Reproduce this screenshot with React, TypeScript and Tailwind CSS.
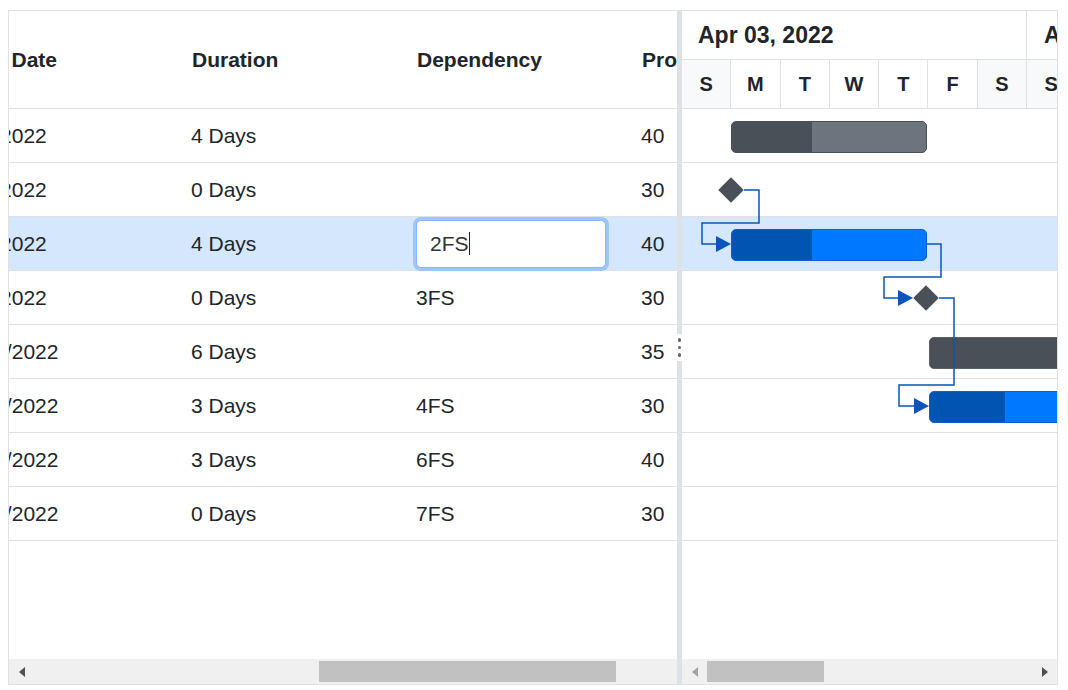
const rows = [
  { end: '4/7/2022', duration: '4 Days', dep: '', progress: 40 },
  { end: '4/4/2022', duration: '0 Days', dep: '', progress: 30 },
  { end: '4/7/2022', duration: '4 Days', dep: '2FS', progress: 40 },
  { end: '4/7/2022', duration: '0 Days', dep: '3FS', progress: 30 },
  { end: '4/15/2022', duration: '6 Days', dep: '', progress: 35 },
  { end: '4/12/2022', duration: '3 Days', dep: '4FS', progress: 30 },
  { end: '4/15/2022', duration: '3 Days', dep: '6FS', progress: 40 },
  { end: '4/15/2022', duration: '0 Days', dep: '7FS', progress: 30 },
];

const days = ['S', 'M', 'T', 'W', 'T', 'F', 'S', 'S', 'M', 'T', 'W', 'T', 'F', 'S'];

type Bar =
  | { kind: 'task'; left: number; width: number; done: number; tone: 'gray' | 'blue' | 'dark' }
  | { kind: 'milestone'; center: number };

const bars: (Bar | null)[] = [
  { kind: 'task', left: 49, width: 196, done: 80, tone: 'gray' },
  { kind: 'milestone', center: 49 },
  { kind: 'task', left: 49, width: 196, done: 80, tone: 'blue' },
  { kind: 'milestone', center: 244 },
  { kind: 'task', left: 247, width: 400, done: 140, tone: 'dark' },
  { kind: 'task', left: 247, width: 246, done: 75, tone: 'blue' },
  null,
  null,
];

// connector polylines + arrow heads, chart body coordinates
const links = [
  { line: '62,81 77,81 77,114 20,114 20,135 34,135', head: '34,127 49,135 34,143' },
  { line: '245,135 259,135 259,168 202,168 202,189 216,189', head: '216,181 231,189 216,197' },
  { line: '257,189 272,189 272,276 217,276 217,297 232,297', head: '232,289 247,297 232,305' },
];

function TaskBar({ bar }: { bar: Bar }) {
  if (bar.kind === 'milestone') {
    return (
      <div
        className="absolute top-[18px] w-[18px] h-[18px] rotate-45 bg-[#495057]"
        style={{ left: bar.center - 9 }}
      />
    );
  }
  const blue = bar.tone === 'blue';
  return (
    <div
      className={`absolute top-[12px] h-[32px] rounded-[5px] border overflow-hidden flex ${
        blue ? 'border-[#0b5ed7] bg-[#0078ff]' : bar.tone === 'dark' ? 'border-[#5c636a] bg-[#495057]' : 'border-[#495057] bg-[#6c757d]'
      }`}
      style={{ left: bar.left, width: bar.width }}
    >
      <div className={blue ? 'bg-[#0055b3]' : 'bg-[#495057]'} style={{ width: bar.done }} />
    </div>
  );
}

function Arrow({ dir, dim }: { dir: 'left' | 'right'; dim?: boolean }) {
  return (
    <svg width="6" height="10" viewBox="0 0 6 10">
      <polygon points={dir === 'left' ? '6,0 0,5 6,10' : '0,0 6,5 0,10'} fill={dim ? '#a3a3a3' : '#505050'} />
    </svg>
  );
}

export default function App() {
  return (
    <div className="min-h-screen bg-white pt-[10px] pl-[8px] font-['Liberation_Sans',Arial,sans-serif] text-[#212529]">
      <div className="flex w-[1050px] h-[675px] border border-[#dee2e6]">
        {/* Grid pane */}
        <div className="flex flex-col w-[668px] overflow-hidden">
          <div className="flex-1 overflow-hidden">
            <div className="ml-[-56px] w-[960px]">
              <div className="flex h-[98px] border-b border-[#dee2e6] text-[21px] font-bold">
                <div className="w-[226px] pl-[13px] flex items-center">End Date</div>
                <div className="w-[225px] pl-[13px] flex items-center">Duration</div>
                <div className="w-[225px] pl-[13px] flex items-center">Dependency</div>
                <div className="w-[225px] pl-[13px] flex items-center">Progress</div>
              </div>
              {rows.map((r, i) => (
                <div
                  key={i}
                  className={`flex h-[54px] border-b border-[#dee2e6] text-[21px] ${i === 2 ? 'bg-[#d4e7fc]' : ''}`}
                >
                  <div className="w-[226px] pl-3 flex items-center">{r.end}</div>
                  <div className="w-[225px] pl-3 flex items-center">{r.duration}</div>
                  <div className="w-[225px] pl-3 flex items-center">
                    {i === 2 ? (
                      <div className="w-[190px] h-[48px] bg-white border border-[#86b7fe] rounded-[5px] ring-[3px] ring-[#9ec5fe] flex items-center pl-[13px] text-[#333]">
                        {r.dep}
                        <span className="w-[1.5px] h-[23px] bg-[#212529]" />
                      </div>
                    ) : (
                      r.dep
                    )}
                  </div>
                  <div className="w-[225px] pl-3 flex items-center">{r.progress}</div>
                </div>
              ))}
            </div>
          </div>
          <div className="flex h-[25px] bg-[#f0f0f0]">
            <div className="w-[25px] flex items-center justify-center">
              <Arrow dir="left" />
            </div>
            <div className="ml-[285px] w-[297px] my-[2px] bg-[#c1c1c1]" />
          </div>
        </div>

        {/* Splitter */}
        <div className="w-[5px] flex flex-col">
          <div className="flex-1 bg-[#dee2e6]" />
          <div className="h-[27px] flex flex-col items-center justify-center gap-[4px]">
            <span className="w-[3.5px] h-[3.5px] rounded-full bg-[#5f666d]" />
            <span className="w-[3.5px] h-[3.5px] rounded-full bg-[#5f666d]" />
            <span className="w-[3.5px] h-[3.5px] rounded-full bg-[#5f666d]" />
          </div>
          <div className="flex-1 bg-[#dee2e6]" />
        </div>

        {/* Chart pane */}
        <div className="flex-1 flex flex-col overflow-hidden">
          <div className="flex h-[49px] border-b border-[#dee2e6] font-bold shrink-0">
            <div className="w-[345px] shrink-0 border-r border-[#dee2e6] pl-4 flex items-center text-[23px]">
              Apr 03, 2022
            </div>
            <div className="w-[345px] shrink-0 pl-[17px] flex items-center text-[23px]">Apr 10, 2022</div>
          </div>
          <div className="flex h-[49px] border-b border-[#dee2e6] font-bold text-[20px] shrink-0">
            {days.map((d, i) => (
              <div
                key={i}
                className={`w-[49.3px] shrink-0 border-r border-[#dee2e6] flex items-center justify-center ${
                  i % 7 === 0 || i % 7 === 6 ? 'bg-[#f8f9fa]' : 'bg-white'
                }`}
              >
                {d}
              </div>
            ))}
          </div>
          <div className="relative flex-1 overflow-hidden">
            {rows.map((_, i) => {
              const bar = bars[i];
              return (
                <div
                  key={i}
                  className={`relative h-[54px] border-b border-[#dee2e6] ${i === 2 ? 'bg-[#d4e7fc]' : ''}`}
                >
                  {bar && <TaskBar bar={bar} />}
                </div>
              );
            })}
            <svg className="absolute left-0 top-0" width="375" height="440">
              {links.map((l, i) => (
                <g key={i}>
                  <polyline points={l.line} fill="none" stroke="#0a56b8" strokeWidth="1.5" />
                  <polygon points={l.head} fill="#0a56b8" />
                </g>
              ))}
            </svg>
          </div>
          <div className="flex h-[25px] bg-[#f0f0f0] shrink-0">
            <div className="w-[25px] flex items-center justify-center">
              <Arrow dir="left" dim />
            </div>
            <div className="w-[117px] my-[2px] bg-[#c1c1c1]" />
            <div className="flex-1" />
            <div className="w-[25px] flex items-center justify-center">
              <Arrow dir="right" />
            </div>
          </div>
        </div>
      </div>
    </div>
  );
}
